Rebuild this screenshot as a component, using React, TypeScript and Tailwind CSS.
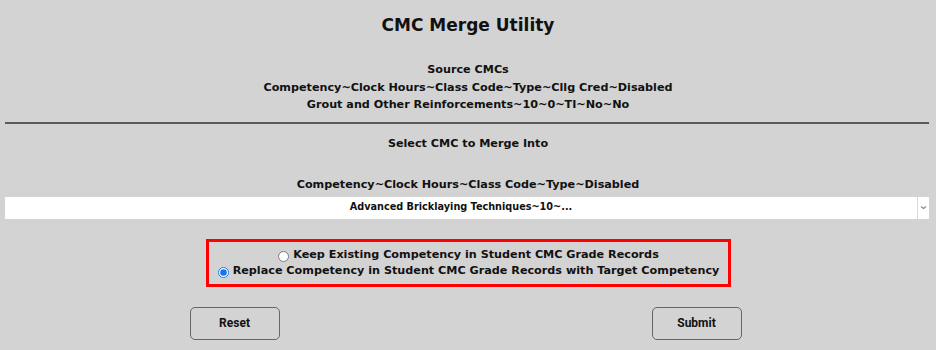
import { useState } from 'react';

const App = () => {
    const [mode, setMode] = useState<'keep' | 'replace'>('replace');

    return (
        <div className="w-[936px] h-[350px] bg-[#d3d3d3] text-[#111] font-['DejaVu_Sans',sans-serif] overflow-hidden">
            {/* Titre */}
            <h1 className="pt-[12px] text-center text-[17px] leading-[26px] font-bold">CMC Merge Utility</h1>

            {/* Source */}
            <div className="mt-[23px] text-center text-[11.2px] leading-[17.5px] font-bold">
                <div>Source CMCs</div>
                <div>Competency~Clock Hours~Class Code~Type~Cllg Cred~Disabled</div>
                <div>Grout and Other Reinforcements~10~0~TI~No~No</div>
            </div>

            <hr className="mx-[5px] mr-[7px] mt-[8px] border-0 h-[2px] bg-[#5a5a5a]" />

            <div className="mt-[11px] text-center text-[11.2px] leading-[18px] font-bold">Select CMC to Merge Into</div>

            <div className="mt-[23px] text-center text-[11.2px] leading-[18px] font-bold">
                Competency~Clock Hours~Class Code~Type~Disabled
            </div>

            {/* Select */}
            <div className="mt-[3px] mx-[5px] mr-[7px] h-[22px] bg-white flex items-stretch">
                <div className="flex-1 flex items-center justify-center text-[9.7px] font-bold">
                    Advanced Bricklaying Techniques~10~...
                </div>
                <div className="w-[12px] border-l border-[#d8d8d8] flex items-center justify-center">
                    <svg width="7" height="5" viewBox="0 0 7 5">
                        <path d="M1 1.5 L3.5 3.5 L6 1.5" stroke="#8a8a8a" strokeWidth="1.2" fill="none" />
                    </svg>
                </div>
            </div>

            {/* Options */}
            <div className="mt-[20px] flex justify-center">
                <div className="ml-[1px] w-[525px] h-[48px] border-[3px] border-[#ff0000] flex flex-col items-center justify-center text-[11.2px] leading-[16px] font-bold whitespace-nowrap">
                    <label className="flex items-center gap-[4px]">
                        <input
                            type="radio"
                            name="mode"
                            checked={mode === 'keep'}
                            onChange={() => setMode('keep')}
                            className="w-[11px] h-[11px] m-0 mt-[3px] accent-[#1a73e8]"
                        />
                        Keep Existing Competency in Student CMC Grade Records
                    </label>
                    <label className="flex items-center gap-[4px]">
                        <input
                            type="radio"
                            name="mode"
                            checked={mode === 'replace'}
                            onChange={() => setMode('replace')}
                            className="w-[11px] h-[11px] m-0 mt-[3px] accent-[#1a73e8]"
                        />
                        Replace Competency in Student CMC Grade Records with Target Competency
                    </label>
                </div>
            </div>

            {/* Boutons */}
            <div className="mt-[20px] flex justify-center gap-[372px] ml-[-5px]">
                <button className="w-[90px] h-[33px] border border-[#666] rounded-[5px] text-[12px] font-bold font-['Roboto',sans-serif]">
                    Reset
                </button>
                <button className="w-[90px] h-[33px] border border-[#666] rounded-[5px] text-[12px] font-bold font-['Roboto',sans-serif]">
                    Submit
                </button>
            </div>
        </div>
    );
};

export default App;
